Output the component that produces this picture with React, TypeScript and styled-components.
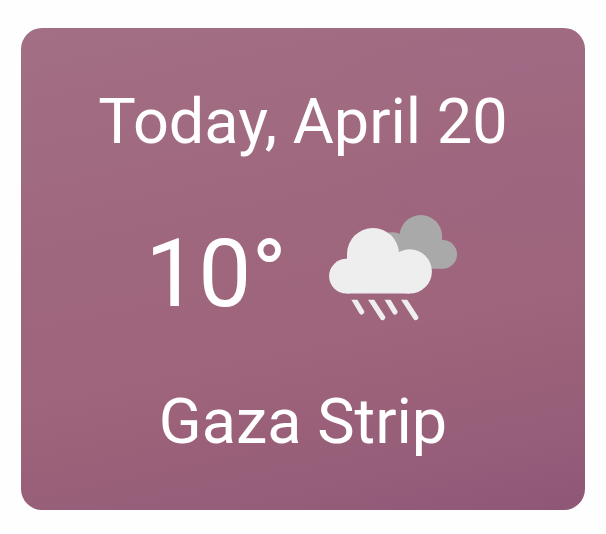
import React from "react";
import styled, { createGlobalStyle } from "styled-components";

const GlobalStyle = createGlobalStyle`
  body {
    margin: 0;
    background: #fefefe;
    overflow: hidden;
  }
`;

const Page = styled.main`
  box-sizing: border-box;
  width: 606px;
  height: 534px;
  padding: 28px 21px 24px;
`;

const Card = styled.section`
  box-sizing: border-box;
  display: flex;
  flex-direction: column;
  align-items: center;
  height: 482px;
  padding-top: 56px;
  border-radius: 21px;
  color: #fff;
  font-family: Roboto, sans-serif;
  background:
    radial-gradient(ellipse 200px 80px at 520px 165px, rgba(155, 98, 132, 0.35), rgba(155, 98, 132, 0)),
    radial-gradient(ellipse 200px 50px at 500px 40px, rgba(156, 104, 138, 0.3), rgba(156, 104, 138, 0)),
    linear-gradient(168deg, #a26f84 0%, #9f677e 40%, #9e657c 62%, #9a6079 76%, #965e7a 86%, #8f5776 100%);
`;

const Label = styled.div`
  font-size: 63px;
  line-height: 76px;
  white-space: nowrap;
`;

const Conditions = styled.div`
  display: flex;
  align-items: center;
  gap: 38px;
  margin: 57px 0 55px;
`;

const Temperature = styled.div`
  font-size: 94.5px;
  line-height: 113px;
  height: 112px;
`;

const RainIcon = styled.svg`
  display: block;
  width: 136px;
  height: 112px;
`;

const drops = [
  "M352.6 296.8L361.6 311.9",
  "M369.2 296.8L382.6 317.5",
  "M385.8 296.8L394.9 311.9",
  "M402.2 296.8L415.7 317.5",
];

function CloudRain() {
  return (
    <RainIcon viewBox="325 217 136 112" overflow="visible" aria-label="Rain">
      <defs>
        <clipPath id="below-cloud">
          <rect x="345" y="299.7" width="80" height="24" />
        </clipPath>
      </defs>
      <g fill="#a9a9a9">
        <circle cx="420.8" cy="236.4" r="21.3" />
        <circle cx="442.6" cy="254.4" r="14.4" />
        <circle cx="392" cy="250.4" r="18.2" />
        <path d="M392 236H442V254.4H442.6V268.8H392Z" />
      </g>
      <g fill="#eee">
        <circle cx="373" cy="254" r="26" />
        <circle cx="346.5" cy="276.2" r="17.4" />
        <circle cx="409.7" cy="271.4" r="22.2" />
        <path d="M346.5 258.8H347V254H399V251.7L410 256V293.6H346.5Z" />
      </g>
      <g stroke="#eee" strokeWidth="5.2" strokeLinecap="round" clipPath="url(#below-cloud)">
        {drops.map((d) => (
          <path key={d} d={d} />
        ))}
      </g>
    </RainIcon>
  );
}

export default function App() {
  return (
    <>
      <GlobalStyle />
      <Page>
        <Card>
          <Label>Today, April 20</Label>
          <Conditions>
            <Temperature>10°</Temperature>
            <CloudRain />
          </Conditions>
          <Label>Gaza Strip</Label>
        </Card>
      </Page>
    </>
  );
}
